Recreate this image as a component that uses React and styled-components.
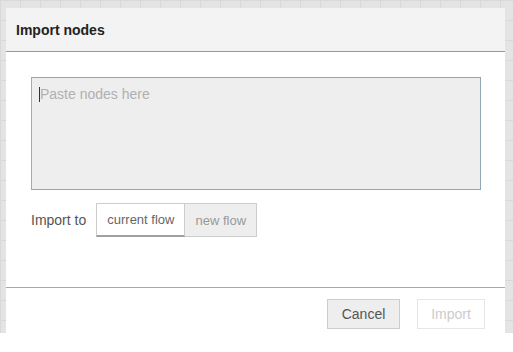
import React, { useState } from "react";
import styled, { createGlobalStyle } from "styled-components";

const GlobalStyle = createGlobalStyle`
  html, body {
    margin: 0;
    padding: 0;
    background: #ffffff;
    font-family: "Liberation Sans", Arial, sans-serif;
  }
`;

export default function App() {
  const [target, setTarget] = useState("current");

  return (
    <>
      <GlobalStyle />
      <Workspace>
        <Dialog>
          <DialogHeader>Import nodes</DialogHeader>
          <DialogBody>
            <PasteBox>
              <PasteArea placeholder="Paste nodes here" />
              <Caret />
            </PasteBox>
            <ImportRow>
              <ImportLabel>Import to</ImportLabel>
              <ToggleGroup>
                <ToggleButton
                  $active={target === "current"}
                  onClick={() => setTarget("current")}
                >
                  current flow
                </ToggleButton>
                <ToggleButton
                  $active={target === "new"}
                  onClick={() => setTarget("new")}
                >
                  new flow
                </ToggleButton>
              </ToggleGroup>
            </ImportRow>
          </DialogBody>
          <DialogFooter>
            <FooterButton $width={73}>Cancel</FooterButton>
            <FooterButton $width={68} $disabled>Import</FooterButton>
          </DialogFooter>
        </Dialog>
      </Workspace>
    </>
  );
}

const Workspace = styled.div`
  height: 333px;
  box-sizing: border-box;
  padding: 8px 8px 0 6px;
  display: flex;
  background-color: #e4e4e4;
  background-image:
    linear-gradient(to right, #d9d9d9 1px, transparent 1px),
    linear-gradient(to bottom, #d9d9d9 1px, transparent 1px);
  background-size: 20px 20px;
  overflow: hidden;
`;

const Dialog = styled.div`
  flex: 1;
  display: flex;
  flex-direction: column;
  background: #ffffff;
`;

const DialogHeader = styled.div`
  height: 44px;
  box-sizing: border-box;
  display: flex;
  align-items: center;
  padding: 0 10px;
  background: #f3f3f3;
  border-bottom: 1px solid #999999;
  color: #222222;
  font-size: 14px;
  font-weight: 700;
`;

const DialogBody = styled.div`
  height: 235px;
  box-sizing: border-box;
  padding: 25px 24px 0 25px;
  display: flex;
  flex-direction: column;
  gap: 13px;
`;

const PasteBox = styled.div`
  position: relative;
  height: 113px;
`;

const PasteArea = styled.textarea`
  width: 100%;
  height: 100%;
  box-sizing: border-box;
  margin: 0;
  padding: 8px 8px;
  resize: none;
  outline: none;
  background: #eeeeee;
  border: 1px solid #8fa8b3;
  border-top-color: #a0a0a0;
  border-left-color: #9eaeb6;
  font-family: "Liberation Sans", Arial, sans-serif;
  font-size: 14px;
  color: #555555;
  &::placeholder {
    color: #b0b0b0;
  }
`;

const Caret = styled.span`
  position: absolute;
  left: 8px;
  top: 10px;
  width: 1px;
  height: 15px;
  background: #333333;
`;

const ImportRow = styled.div`
  display: flex;
  align-items: center;
  gap: 10px;
`;

const ImportLabel = styled.span`
  color: #555555;
  font-size: 14px;
`;

const ToggleGroup = styled.div`
  display: flex;
`;

const ToggleButton = styled.button`
  height: 34px;
  box-sizing: border-box;
  margin: 0;
  padding: 0 10px;
  font-family: "Liberation Sans", Arial, sans-serif;
  font-size: 13px;
  cursor: pointer;
  border: 1px solid #cccccc;
  border-bottom: ${(p) => (p.$active ? "2px solid #a0a0a0" : "1px solid #cccccc")};
  background: ${(p) => (p.$active ? "#ffffff" : "#eeeeee")};
  color: ${(p) => (p.$active ? "#666666" : "#999999")};
  & + & {
    border-left: none;
  }
`;

const DialogFooter = styled.div`
  flex: 1;
  border-top: 1px solid #aaaaaa;
  display: flex;
  justify-content: flex-end;
  align-items: flex-start;
  gap: 17px;
  padding: 11px 20px 0 0;
`;

const FooterButton = styled.button`
  width: ${(p) => p.$width}px;
  height: 30px;
  box-sizing: border-box;
  margin: 0;
  padding: 0;
  font-family: "Liberation Sans", Arial, sans-serif;
  font-size: 14px;
  border: 1px solid ${(p) => (p.$disabled ? "#e6e6e6" : "#cccccc")};
  background: ${(p) => (p.$disabled ? "#ffffff" : "#eeeeee")};
  color: ${(p) => (p.$disabled ? "#cccccc" : "#555555")};
  cursor: ${(p) => (p.$disabled ? "default" : "pointer")};
`;
